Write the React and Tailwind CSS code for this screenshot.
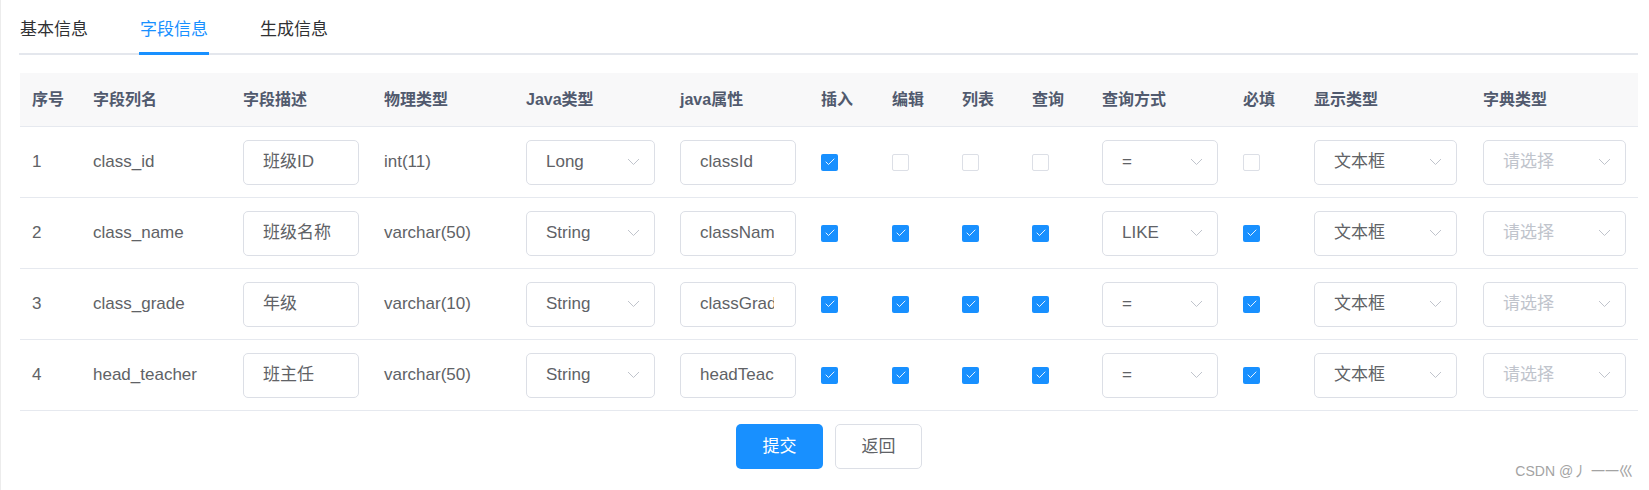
import { Check } from "lucide-react";

const GRID =
  "grid grid-cols-[61px_150px_141px_142px_154px_141px_71px_70px_70px_70px_141px_71px_169px_168px]";

const heads = [
  "序号",
  "字段列名",
  "字段描述",
  "物理类型",
  "Java类型",
  "java属性",
  "插入",
  "编辑",
  "列表",
  "查询",
  "查询方式",
  "必填",
  "显示类型",
  "字典类型",
];

const rows = [
  { no: 1, col: "class_id", desc: "班级ID", type: "int(11)", java: "Long", attr: "classId", flags: [1, 0, 0, 0], query: "=", req: 0 },
  { no: 2, col: "class_name", desc: "班级名称", type: "varchar(50)", java: "String", attr: "className", flags: [1, 1, 1, 1], query: "LIKE", req: 1 },
  { no: 3, col: "class_grade", desc: "年级", type: "varchar(10)", java: "String", attr: "classGrade", flags: [1, 1, 1, 1], query: "=", req: 1 },
  { no: 4, col: "head_teacher", desc: "班主任", type: "varchar(50)", java: "String", attr: "headTeacher", flags: [1, 1, 1, 1], query: "=", req: 1 },
];

function Box({ checked }) {
  if (checked) {
    return (
      <span className="flex h-[17px] w-[17px] items-center justify-center rounded-[2px] bg-[#1890ff]">
        <Check size={12} strokeWidth={1.8} className="text-white" />
      </span>
    );
  }
  return <span className="h-[17px] w-[17px] rounded-[2px] border border-[#dcdfe6] bg-white" />;
}

function Input({ value, width }) {
  return (
    <div className={`flex h-[45px] items-center rounded-[5px] border border-[#dcdfe6] bg-white pl-[19px] pr-[21px] ${width}`}>
      <div className="overflow-hidden whitespace-nowrap text-[17px] text-[#606266]">{value}</div>
    </div>
  );
}

function Arrow() {
  return (
    <svg width="13" height="8" viewBox="0 0 13 8" className="text-[#c0c4cc]">
      <polyline points="1,1 6.5,6.5 12,1" fill="none" stroke="currentColor" strokeWidth="1" />
    </svg>
  );
}

function Select({ value, width, placeholder }) {
  return (
    <div className={`flex h-[45px] items-center justify-between rounded-[5px] border border-[#dcdfe6] bg-white pl-[19px] pr-[14px] ${width}`}>
      <span className={`text-[17px] ${placeholder ? "text-[#c0c4cc]" : "text-[#606266]"}`}>{value}</span>
      <Arrow />
    </div>
  );
}

export default function App() {
  return (
    <div
      className="relative h-[490px] w-full overflow-hidden border-l border-[#ececec] bg-white pl-[18px] pr-[11px] pt-[7px]"
      style={{ fontFamily: '"Liberation Sans", "Noto Sans CJK SC", sans-serif' }}
    >
      {/* tabs */}
      <div className="flex gap-[52px] border-b-2 border-[#e4e7ed] pl-[1px]">
        <div className="flex h-[46px] items-center text-[17px] text-[#303133]">基本信息</div>
        <div className="relative flex h-[46px] items-center text-[17px] text-[#1890ff]">
          字段信息
          <span className="absolute -bottom-[2px] -left-[1px] -right-[1px] h-[3px] bg-[#1890ff]" />
        </div>
        <div className="flex h-[46px] items-center text-[17px] text-[#303133]">生成信息</div>
      </div>

      {/* table */}
      <div className="mt-[18px] pl-[1px]">
        <div className={`${GRID} h-[54px] border-b border-[#e6e9ef] bg-[#f8f8f9]`}>
          {heads.map((h) => (
            <div key={h} className="flex items-center px-[12px] text-[16px] font-bold text-[#515a6e]">
              {h}
            </div>
          ))}
        </div>

        {rows.map((r) => (
          <div key={r.no} className={`${GRID} h-[71px] border-b border-[#e6e9ef] text-[17px] text-[#606266]`}>
            <div className="flex items-center px-[12px]">{r.no}</div>
            <div className="flex items-center px-[12px]">{r.col}</div>
            <div className="flex items-center px-[12px]">
              <Input value={r.desc} width="w-[116px]" />
            </div>
            <div className="flex items-center px-[12px]">{r.type}</div>
            <div className="flex items-center px-[12px]">
              <Select value={r.java} width="w-[129px]" />
            </div>
            <div className="flex items-center px-[12px]">
              <Input value={r.attr} width="w-[116px]" />
            </div>
            {r.flags.map((f, i) => (
              <div key={i} className="flex items-center px-[12px]">
                <Box checked={f} />
              </div>
            ))}
            <div className="flex items-center px-[12px]">
              <Select value={r.query} width="w-[116px]" />
            </div>
            <div className="flex items-center px-[12px]">
              <Box checked={r.req} />
            </div>
            <div className="flex items-center px-[12px]">
              <Select value="文本框" width="w-[143px]" />
            </div>
            <div className="flex items-center px-[12px]">
              <Select value="请选择" width="w-[143px]" placeholder />
            </div>
          </div>
        ))}

        <div className="mt-[13px] flex justify-center gap-[12px]">
          <button className="h-[45px] w-[87px] rounded-[5px] bg-[#1890ff] text-[17px] text-white">提交</button>
          <button className="h-[45px] w-[87px] rounded-[5px] border border-[#dcdfe6] bg-white text-[17px] text-[#606266]">
            返回
          </button>
        </div>
      </div>

      <div className="absolute right-[16px] top-[461px] text-[14px] leading-[20px] text-[#a3a3a3]">CSDN @丿 一一巛</div>
    </div>
  );
}
